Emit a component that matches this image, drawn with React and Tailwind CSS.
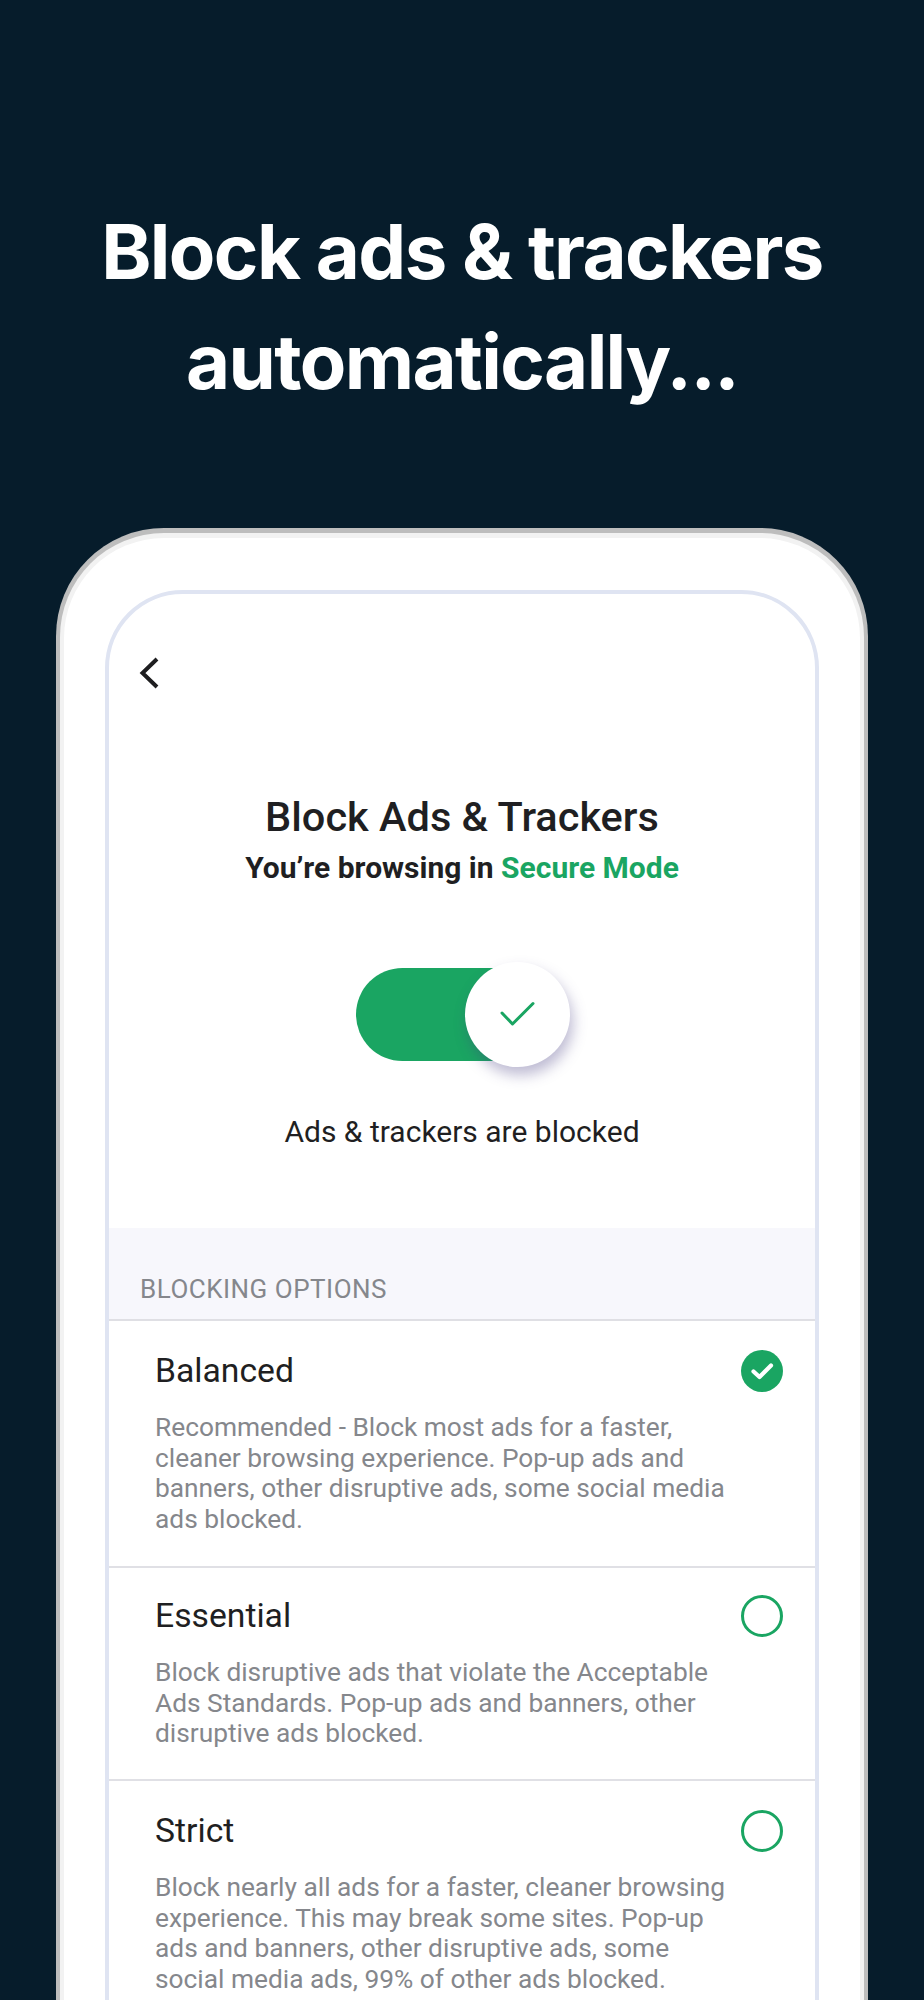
const rows = [
  { t: "Balanced", on: true, h: "h-[247px]", top: "pt-[29px] h-[71px]", d: ["Recommended - Block most ads for a faster,", "cleaner browsing experience. Pop-up ads and", "banners, other disruptive ads, some social media", "ads blocked."] },
  { t: "Essential", on: false, h: "h-[213px]", top: "pt-[27px] h-[69px]", d: ["Block disruptive ads that violate the Acceptable", "Ads Standards. Pop-up ads and banners, other", "disruptive ads blocked."] },
  { t: "Strict", on: false, h: "h-[260px]", top: "pt-[29px] h-[71px]", d: ["Block nearly all ads for a faster, cleaner browsing", "experience. This may break some sites. Pop-up", "ads and banners, other disruptive ads, some", "social media ads, 99% of other ads blocked."] },
];

function Radio({ on }) {
  if (on)
    return (
      <svg width="42" height="42" viewBox="0 0 42 42" className="shrink-0">
        <circle cx="21" cy="21" r="21" fill="#1aa562" />
        <path d="M12.5 21.5 L18.5 27 L30 15.5" fill="none" stroke="#fff" strokeWidth="4.2" strokeLinecap="round" strokeLinejoin="round" />
      </svg>
    );
  return <div className="w-[42px] h-[42px] rounded-full border-[3px] border-[#1aa562] shrink-0" />;
}

export default function App() {
  return (
    <div className="h-[2000px] overflow-hidden bg-[#061c2b] flex flex-col items-center" style={{ fontFamily: "Roboto, sans-serif" }}>
      <h1 className="mt-[196px] w-full text-center text-white font-bold text-[76px] leading-[110px] tracking-[-1.6px]" style={{ fontFamily: "Inter, sans-serif" }}>
        <div>Block ads &amp; trackers</div>
        <div>automatically...</div>
      </h1>
      <div className="mt-[112px] w-[812px] h-[1800px] shrink-0 rounded-[108px] bg-[#bdbdbd] pt-[5px] px-[4px]">
        <div className="h-full rounded-[104px] bg-[#f2f2f2] pt-[5px] px-[4px]">
          <div className="h-full rounded-[100px] bg-white pt-[52px] px-[41px]">
            <div className="h-full rounded-[78px] border-[4px] border-[#dfe4f2] bg-white overflow-hidden">
              <div className="h-[634px] flex flex-col items-center relative">
                <div className="absolute left-[30px] top-[63px]">
                  <svg width="20" height="32" viewBox="0 0 20 32" fill="none">
                    <path d="M18 2 L3.5 16 L18 30" stroke="#1e1e20" strokeWidth="4" />
                  </svg>
                </div>
                <div className="mt-[199px] text-[41.5px] leading-[48px] font-medium text-[#1f1f22]">Block Ads &amp; Trackers</div>
                <div className="mt-[9px] text-[30px] leading-[36px] font-bold text-[#1f1f22]">
                  You’re browsing in <span className="text-[#1aa562]">Secure Mode</span>
                </div>
                <div className="mt-[82px] relative w-[184px] h-[93px] rounded-full bg-[#1aa562] self-start ml-[247px]">
                  <div className="absolute left-[109px] top-[-6px] w-[105px] h-[105px] rounded-full bg-white shadow-[3px_8px_14px_rgba(70,60,130,0.35)] flex items-center justify-center">
                    <svg width="36" height="28" viewBox="0 0 36 28" fill="none">
                      <path d="M2 12 L12.5 23 L33 2.5" stroke="#1aa562" strokeWidth="3" strokeLinecap="round" strokeLinejoin="round" />
                    </svg>
                  </div>
                </div>
                <div className="mt-[53px] text-[30px] leading-[36px] text-[#1f1f22]">Ads &amp; trackers are blocked</div>
              </div>
              <div className="h-[93px] bg-[#f7f7fc] border-b-2 border-[#dfdfe4] pl-[31px] pt-[45px] text-[26px] leading-[32px] tracking-[0.5px] text-[#85878c]">BLOCKING OPTIONS</div>
              {rows.map((r) => (
                <div key={r.t} className={`${r.h} border-b-2 border-[#e0e0e5] pl-[46px] pr-[32px]`}>
                  <div className={`flex items-center justify-between ${r.top}`}>
                    <div className="text-[33.7px] leading-[42px] text-[#1f1f22]">{r.t}</div>
                    <Radio on={r.on} />
                  </div>
                  <div className="mt-[20px] text-[26.3px] leading-[30.6px] text-[#85878c] whitespace-nowrap">
                    {r.d.map((l) => (
                      <div key={l}>{l}</div>
                    ))}
                  </div>
                </div>
              ))}
            </div>
          </div>
        </div>
      </div>
    </div>
  );
}
